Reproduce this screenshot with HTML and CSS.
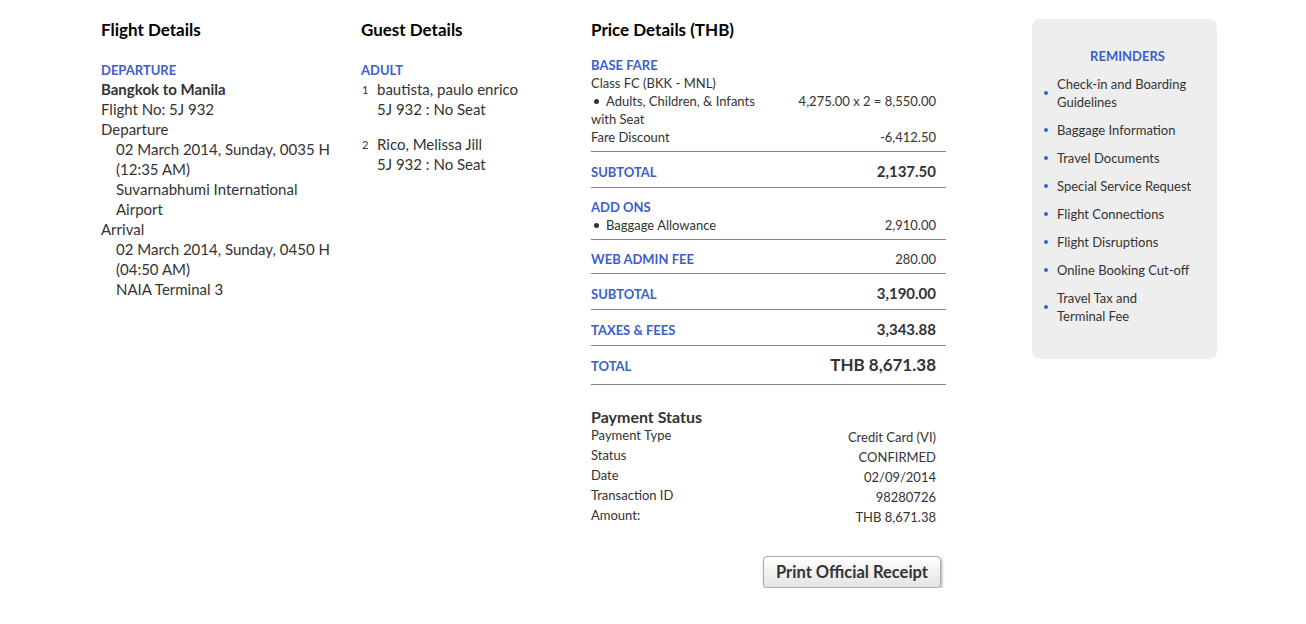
FILE: index.html
```html
<!DOCTYPE html>
<html>
<head>
<meta charset="utf-8">
<link rel="stylesheet" href="styles.css">
</head>
<body>
<div class="page">
  <section class="col col-flight">
    <h2 class="col-title">Flight Details</h2>
    <div class="label">DEPARTURE</div>
    <div class="route">Bangkok to Manila</div>
    <div class="line">Flight No: 5J 932</div>
    <div class="line">Departure</div>
    <div class="indent">
      <div class="line">02 March 2014, Sunday, 0035 H (12:35 AM)</div>
      <div class="line">Suvarnabhumi International Airport</div>
    </div>
    <div class="line">Arrival</div>
    <div class="indent">
      <div class="line">02 March 2014, Sunday, 0450 H (04:50 AM)</div>
      <div class="line">NAIA Terminal 3</div>
    </div>
  </section>

  <section class="col col-guest">
    <h2 class="col-title">Guest Details</h2>
    <div class="label">ADULT</div>
    <div class="guest">
      <span class="num">1</span>
      <div class="guest-info">
        <div class="line">bautista, paulo enrico</div>
        <div class="line">5J 932 : No Seat</div>
      </div>
    </div>
    <div class="guest">
      <span class="num">2</span>
      <div class="guest-info">
        <div class="line">Rico, Melissa Jill</div>
        <div class="line">5J 932 : No Seat</div>
      </div>
    </div>
  </section>

  <section class="col col-price">
    <h2 class="col-title">Price Details (THB)</h2>
    <div class="psec psec-base">
      <div class="plabel">BASE FARE</div>
      <div class="prow"><span>Class FC (BKK - MNL)</span></div>
      <div class="prow">
        <span class="pname"><span class="dot"></span>Adults, Children, &amp; Infants with Seat</span>
        <span class="pval">4,275.00 x 2 = 8,550.00</span>
      </div>
      <div class="prow"><span>Fare Discount</span><span class="pval">-6,412.50</span></div>
    </div>
    <div class="psec psec-sum">
      <div class="prow prow-sum"><span class="plabel">SUBTOTAL</span><span class="pval big">2,137.50</span></div>
    </div>
    <div class="psec psec-add">
      <div class="plabel">ADD ONS</div>
      <div class="prow"><span><span class="dot"></span>Baggage Allowance</span><span class="pval">2,910.00</span></div>
    </div>
    <div class="psec psec-single">
      <div class="prow prow-sum"><span class="plabel">WEB ADMIN FEE</span><span class="pval">280.00</span></div>
    </div>
    <div class="psec psec-sum">
      <div class="prow prow-sum"><span class="plabel">SUBTOTAL</span><span class="pval big">3,190.00</span></div>
    </div>
    <div class="psec psec-sum">
      <div class="prow prow-sum"><span class="plabel">TAXES &amp; FEES</span><span class="pval big">3,343.88</span></div>
    </div>
    <div class="psec psec-total">
      <div class="prow prow-sum"><span class="plabel">TOTAL</span><span class="pval total">THB 8,671.38</span></div>
    </div>

    <div class="payment">
      <h3 class="pay-title">Payment Status</h3>
      <div class="pay-row"><span class="pay-key">Payment Type</span><span class="pay-val">Credit Card (VI)</span></div>
      <div class="pay-row"><span class="pay-key">Status</span><span class="pay-val">CONFIRMED</span></div>
      <div class="pay-row"><span class="pay-key">Date</span><span class="pay-val">02/09/2014</span></div>
      <div class="pay-row"><span class="pay-key">Transaction ID</span><span class="pay-val">98280726</span></div>
      <div class="pay-row"><span class="pay-key">Amount:</span><span class="pay-val">THB 8,671.38</span></div>
    </div>
    <div class="btn-wrap">
      <button class="btn">Print Official Receipt</button>
    </div>
  </section>

  <aside class="reminders">
    <div class="rem-title">REMINDERS</div>
    <ul class="rem-list">
      <li><span class="rdot"></span><span>Check-in and Boarding Guidelines</span></li>
      <li><span class="rdot"></span><span>Baggage Information</span></li>
      <li><span class="rdot"></span><span>Travel Documents</span></li>
      <li><span class="rdot"></span><span>Special Service Request</span></li>
      <li><span class="rdot"></span><span>Flight Connections</span></li>
      <li><span class="rdot"></span><span>Flight Disruptions</span></li>
      <li><span class="rdot"></span><span>Online Booking Cut-off</span></li>
      <li><span class="rdot"></span><span>Travel Tax and <span class="nw">Terminal Fee</span></span></li>
    </ul>
  </aside>
</div>
</body>
</html>
```

FILE: styles.css
```css
* { box-sizing: border-box; }
html, body { margin: 0; padding: 0; background: #fff; }
body {
  font-family: Lato, "Liberation Sans", sans-serif;
  color: #333;
}
.page {
  display: flex;
  align-items: flex-start;
  padding-left: 101px;
  padding-top: 19px;
}
.col-title {
  margin: 0;
  font-size: 17px;
  font-weight: 700;
  color: #000;
  line-height: 22px;
}
.col-flight { width: 260px; padding-right: 30px; }
.col-guest { width: 230px; }
.col-price { width: 355px; }

.label {
  margin-top: 20px;
  color: #3b5fcc;
  font-weight: 700;
  font-size: 13px;
  line-height: 18px;
}
.route { font-weight: 700; font-size: 15px; line-height: 20px; }
.line { font-size: 15px; line-height: 20px; }
.indent { padding-left: 15px; }

.guest { display: flex; margin-bottom: 15px; }
.num { width: 16px; font-size: 11px; line-height: 20px; padding-left: 1px; padding-top: 1px; }

/* price */
.col-price .col-title { margin-bottom: 15px; }
.psec {
  border-bottom: 1px solid #888;
  font-size: 13px;
  line-height: 18px;
}
.plabel {
  color: #3b5fcc;
  font-weight: 700;
  font-size: 13px;
}
.prow {
  display: flex;
  justify-content: space-between;
  align-items: flex-start;
  padding-right: 10px;
}
.prow-sum { align-items: baseline; }
.pname { width: 175px; }
.dot {
  display: inline-block;
  width: 5px; height: 5px;
  border-radius: 50%;
  background: #333;
  margin: 0 7px 2px 3px;
  vertical-align: middle;
}
.pval { text-align: right; }
.big { font-weight: 700; font-size: 15px; }
.total { font-weight: 700; font-size: 17px; }
.psec-base { padding-bottom: 5px; }
.psec-sum { padding: 10px 0 6px; }
.psec-single { padding: 10px 0 5px; }
.psec-add { padding: 10px 0 5px; }
.psec-total { padding: 10px 0 9px; }

.payment { margin-top: 22px; padding-right: 10px; }
.pay-title { margin: 0; font-size: 16px; font-weight: 700; line-height: 20px; color: #333; }
.pay-row {
  display: flex;
  justify-content: space-between;
  align-items: flex-start;
  font-size: 13px;
  line-height: 20px;
}
.pay-key { margin-top: -2px; }
.btn-wrap { display: flex; justify-content: flex-end; padding-right: 5px; margin-top: 29px; }
.btn {
  font-family: inherit;
  font-size: 16.5px;
  font-weight: 700;
  color: #333;
  height: 32px;
  padding: 0 12px;
  border: 1px solid #aaa;
  border-radius: 4px;
  background: linear-gradient(#fefefe, #e4e4e4);
  box-shadow: 1px 2px 3px rgba(0,0,0,0.35);
}

/* reminders */
.reminders {
  margin-left: 86px;
  width: 185px;
  background: #eee;
  border-radius: 8px;
  padding: 28px 10px 34px 12px;
}
.rem-title {
  text-align: center;
  color: #3b5fcc;
  font-weight: 700;
  font-size: 13px;
  line-height: 18px;
  padding-left: 4px;
}
.rem-list { list-style: none; margin: 10px 0 0; padding: 0; }
.rem-list li {
  display: flex;
  align-items: center;
  font-size: 13px;
  line-height: 18px;
  margin-bottom: 10px;
}
.rem-list li:last-child { margin-bottom: 0; }
.nw { white-space: nowrap; }
.rdot {
  flex: none;
  width: 4px; height: 4px;
  border-radius: 50%;
  background: #3b5fcc;
  margin-right: 9px;
}
```
